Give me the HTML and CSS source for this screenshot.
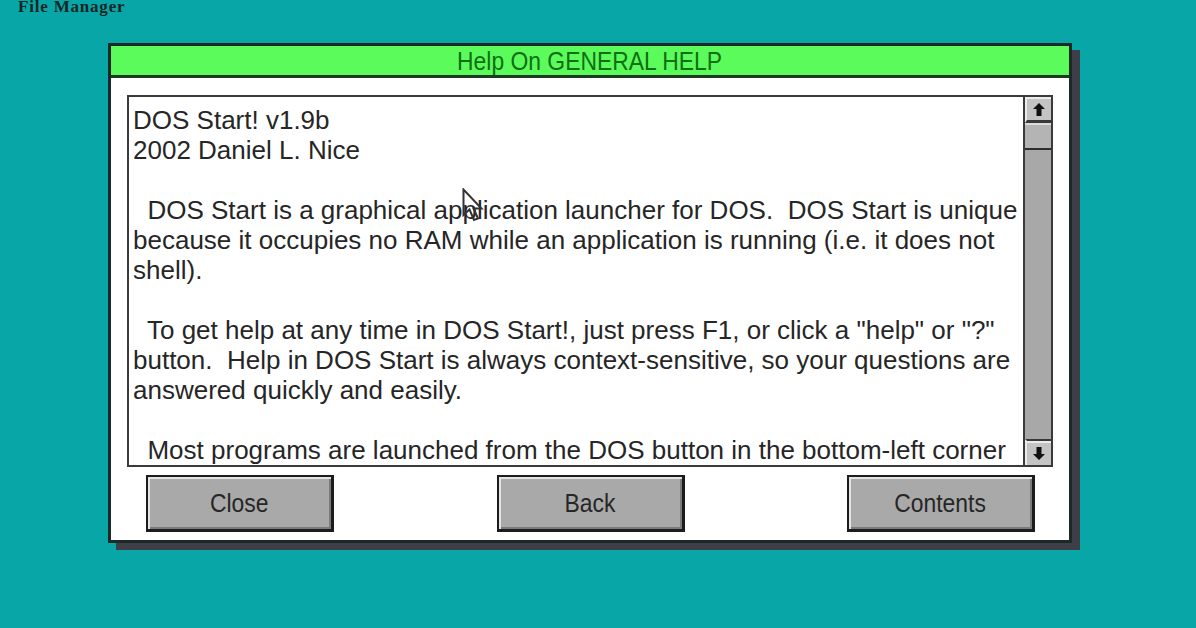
FILE: index.html
```html
<!DOCTYPE html>
<html lang="en">
<head>
<meta charset="utf-8">
<title>Help On GENERAL HELP</title>
<link rel="stylesheet" href="styles.css">
</head>
<body>
<div class="desktop">
  <div class="desk-label">File Manager</div>
  <div class="window">
    <div class="titlebar"><span class="squeeze">Help On GENERAL HELP</span></div>
    <div class="client">
      <div class="viewer">
        <div class="text">
          <div class="line">DOS Start! v1.9b</div>
          <div class="line">2002 Daniel L. Nice</div>
          <div class="line"> </div>
          <div class="line">  DOS Start is a graphical application launcher for DOS.  DOS Start is unique</div>
          <div class="line">because it occupies no RAM while an application is running (i.e. it does not</div>
          <div class="line">shell).</div>
          <div class="line"> </div>
          <div class="line">  To get help at any time in DOS Start!, just press F1, or click a "help" or "?"</div>
          <div class="line">button.  Help in DOS Start is always context-sensitive, so your questions are</div>
          <div class="line">answered quickly and easily.</div>
          <div class="line"> </div>
          <div class="line">  Most programs are launched from the DOS button in the bottom-left corner</div>
        </div>
        <div class="scrollbar">
          <div class="sb-btn">
            <svg width="12" height="13" viewBox="0 0 12 13"><path d="M6 0 L12 6 L8.5 6 L8.5 13 L3.5 13 L3.5 6 L0 6 Z" fill="#111"/></svg>
          </div>
          <div class="sb-thumb"></div>
          <div class="sb-track"></div>
          <div class="sb-btn">
            <svg width="12" height="13" viewBox="0 0 12 13"><path d="M6 13 L12 7 L8.5 7 L8.5 0 L3.5 0 L3.5 7 L0 7 Z" fill="#111"/></svg>
          </div>
        </div>
      </div>
      <div class="buttons">
        <div class="btn"><span class="squeeze">Close</span></div>
        <div class="btn"><span class="squeeze">Back</span></div>
        <div class="btn"><span class="squeeze">Contents</span></div>
      </div>
    </div>
  </div>
</div>
<svg class="cursor" width="26" height="38" viewBox="0 0 26 38"><path d="M1.5 1.5 L1.5 27 L7.5 21.5 L12 32 L16 30.5 L11.5 20.5 L19.5 20.5 Z" fill="none" stroke="#333" stroke-width="2" stroke-linejoin="miter"/></svg>
</body>
</html>
```

FILE: styles.css
```css
html, body {
  margin: 0;
  padding: 0;
}
body {
  background: #08a6a6;
  width: 1196px;
  height: 628px;
  overflow: hidden;
  font-family: "Liberation Sans", Arial, sans-serif;
}
.desk-label {
  height: 43px;
  padding-left: 18px;
  font-family: "Liberation Serif", serif;
  font-weight: bold;
  font-size: 17px;
  letter-spacing: 0.8px;
  line-height: 13px;
  color: #132626;
}
.window {
  margin-left: 108px;
  width: 964px;
  height: 500px;
  box-sizing: border-box;
  border: 3px solid #1d2828;
  background: #ffffff;
  box-shadow: 8px 7px 0 #3e3f46;
  display: flex;
  flex-direction: column;
}
.squeeze {
  display: inline-block;
  transform: scaleX(0.88);
}
.titlebar {
  height: 32px;
  box-sizing: border-box;
  background: #5cfb5c;
  border-bottom: 3px solid #1f3a22;
  color: #0f6f12;
  font-size: 26px;
  line-height: 31px;
  text-align: center;
}
.client {
  flex: 1;
  display: flex;
  flex-direction: column;
  padding: 17px 16px 8px 16px;
  gap: 8px;
}
.viewer {
  height: 372px;
  box-sizing: border-box;
  border: 2px solid #3a3a3a;
  display: flex;
  overflow: hidden;
}
.text {
  flex: 1;
  padding: 8px 0 0 4px;
  overflow: hidden;
  color: #262626;
  font-size: 26px;
}
.line {
  height: 30px;
  line-height: 30px;
  white-space: pre;
}
.scrollbar {
  width: 26px;
  border-left: 2px solid #3a3a3a;
  display: flex;
  flex-direction: column;
  background: #a8a8a8;
}
.sb-btn {
  height: 26px;
  box-sizing: border-box;
  background: #c4c4c4;
  border-top: 2px solid #ececec;
  border-left: 2px solid #ececec;
  display: flex;
  align-items: center;
  justify-content: center;
}
.sb-btn:first-child {
  border-bottom: 3px solid #3a3a3a;
}
.sb-btn:last-child {
  border-top: 2px solid #3a3a3a;
  box-shadow: inset 0 2px 0 #ececec;
}
.sb-thumb {
  height: 27px;
  box-sizing: border-box;
  background: #b4b4b4;
  border-top: 2px solid #dcdcdc;
  border-bottom: 2px solid #2e2e2e;
}
.sb-track {
  flex: 1;
}
.buttons {
  display: flex;
  justify-content: space-between;
  padding: 0 18px 0 19px;
}
.btn {
  width: 188px;
  height: 57px;
  box-sizing: border-box;
  background: #a9a9a9;
  border: 2px solid #1c1c1c;
  border-right-width: 3px;
  border-bottom-width: 3px;
  box-shadow: inset 2px 2px 0 #e4e4e4, inset -2px -2px 0 #7a7a7a;
  color: #262626;
  font-size: 26px;
  text-align: center;
  line-height: 52px;
}
.cursor {
  position: absolute;
  left: 462px;
  top: 188px;
}
```
